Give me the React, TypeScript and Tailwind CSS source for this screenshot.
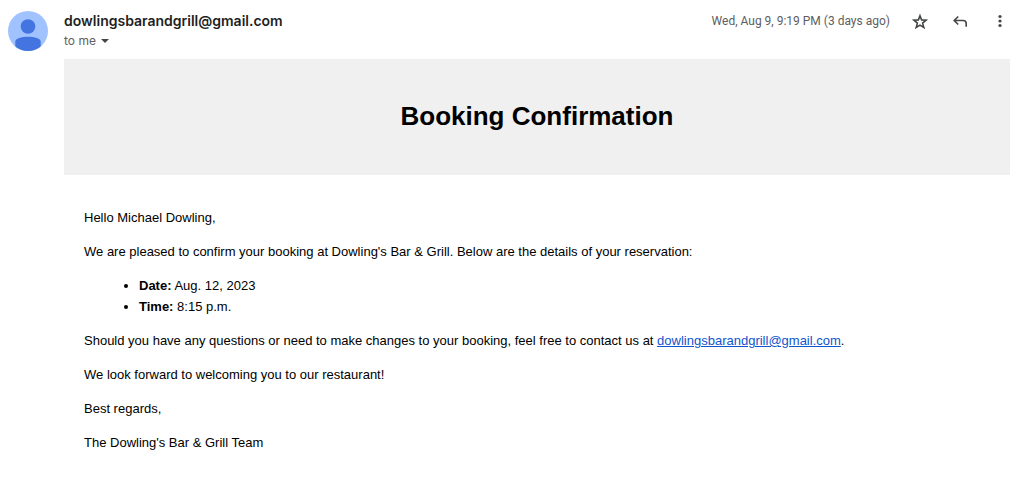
import React from "react";

const address = "dowlingsbarandgrill@gmail.com";
const details = [
  { label: "Date:", value: "Aug. 12, 2023" },
  { label: "Time:", value: "8:15 p.m." },
];

const actions = [
  {
    label: "Star",
    icon: <path d="M10 4.800l1.600 4.100 4.500.300-3.500 2.900 1.200 4.400-3.800-2.400-3.800 2.400 1.200-4.400-3.500-2.900 4.500-.300z" fill="none" stroke="currentColor" strokeWidth="1.600" />,
  },
  {
    label: "Reply",
    icon: <path d="M8.200 5.500L4.200 9.500l4 4M4.500 9.500h8.700a3 3 0 0 1 3 3v3.300" fill="none" stroke="currentColor" strokeWidth="1.600" />,
  },
  {
    label: "More",
    icon: (
      <g fill="currentColor">
        <circle cx="10" cy="5.500" r="1.600" />
        <circle cx="10" cy="10" r="1.600" />
        <circle cx="10" cy="14.500" r="1.600" />
      </g>
    ),
  },
];

function Avatar() {
  return (
    <svg viewBox="0 0 40 40" className="size-10 shrink-0" aria-hidden="true">
      <defs>
        <clipPath id="disc"><circle cx="20" cy="20" r="20" /></clipPath>
      </defs>
      <circle cx="20" cy="20" r="20" fill="#a0c3ff" />
      <g fill="#4374e0" clipPath="url(#disc)">
        <circle cx="20" cy="15.500" r="7.300" />
        <path d="M7.300 40v-9.500c0-3 6-4.800 12.700-4.800s12.700 1.800 12.700 4.800V40z" />
      </g>
    </svg>
  );
}

export default function App() {
  return (
    <article className="flex min-h-screen gap-4 bg-white pt-[11px] pr-[6px] pl-2">
      <Avatar />
      <div className="min-w-0 flex-1">
        <header className="flex h-12 justify-between font-['Inter',sans-serif]">
          <div>
            <h2 className="text-[14px] leading-5 font-semibold text-[#1f1f1f]">{address}</h2>
            <button type="button" className="flex items-center gap-[5px] text-[12px] leading-5 text-[#5e5e5e]">
              to me
              <svg viewBox="0 0 8 4" className="h-1 w-2" fill="#444746" aria-hidden="true"><path d="M0 0h8L4 4z" /></svg>
            </button>
          </div>
          <div className="flex h-5 items-center text-[#444746]">
            <time className="mr-5 font-['Roboto',sans-serif] text-[12px] text-[#5e5e5e]">Wed, Aug 9, 9:19 PM (3 days ago)</time>
            <div className="flex gap-5">
              {actions.map((action) => (
                <button key={action.label} type="button" aria-label={action.label}>
                  <svg viewBox="0 0 20 20" className="size-5" aria-hidden="true">{action.icon}</svg>
                </button>
              ))}
            </div>
          </div>
        </header>
        <div className="font-['Liberation_Sans',Arial,sans-serif] text-[13px] leading-[21px] text-black">
          <div className="bg-[#f0f0f0] pt-[39px] pb-[41px] text-center">
            <h1 className="text-[26px] leading-9 font-bold">Booking Confirmation</h1>
          </div>
          <div className="flex flex-col gap-[13px] px-5 pt-8">
            <p>Hello Michael Dowling,</p>
            <p>We are pleased to confirm your booking at Dowling's Bar &amp; Grill. Below are the details of your reservation:</p>
            <ul className="list-disc pl-[55px]">
              {details.map((d) => (
                <li key={d.label}><strong>{d.label}</strong> {d.value}</li>
              ))}
            </ul>
            <p>Should you have any questions or need to make changes to your booking, feel free to contact us at <a href="mailto:dowlingsbarandgrill@gmail.com" className="text-[#1155cc] underline">{address}</a>.</p>
            <p>We look forward to welcoming you to our restaurant!</p>
            <p>Best regards,</p>
            <p>The Dowling's Bar &amp; Grill Team</p>
          </div>
        </div>
      </div>
    </article>
  );
}
